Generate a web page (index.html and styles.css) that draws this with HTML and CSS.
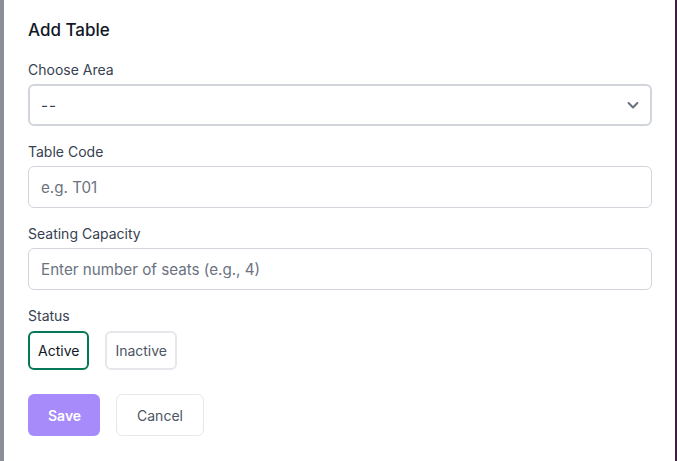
FILE: index.html
```html
<!DOCTYPE html>
<html lang="en">
<head>
<meta charset="utf-8">
<title>Add Table</title>
<link rel="stylesheet" href="styles.css">
</head>
<body>
<div class="screen">
  <div class="backdrop"></div>
  <div class="modal">
    <h2 class="title">Add Table</h2>
    <div class="field">
      <label class="label">Choose Area</label>
      <div class="select">
        <span class="select-value">--</span>
        <svg class="chevron" width="16" height="16" viewBox="0 0 20 20" fill="none" stroke="currentColor" stroke-width="2.6" stroke-linecap="round" stroke-linejoin="round"><path d="M4.5 7.5l5.5 5.5 5.5-5.5"/></svg>
      </div>
    </div>
    <div class="field">
      <label class="label">Table Code</label>
      <input class="input" type="text" placeholder="e.g. T01">
    </div>
    <div class="field">
      <label class="label">Seating Capacity</label>
      <input class="input" type="text" placeholder="Enter number of seats (e.g., 4)">
    </div>
    <div class="field">
      <label class="label">Status</label>
      <div class="status-row">
        <button class="chip chip-active">Active</button>
        <button class="chip">Inactive</button>
      </div>
    </div>
    <div class="actions">
      <button class="btn btn-save">Save</button>
      <button class="btn btn-cancel">Cancel</button>
    </div>
  </div>
  <div class="edge"></div>
</div>
</body>
</html>
```

FILE: styles.css
```css
* { box-sizing: border-box; }
html, body { margin: 0; padding: 0; }
body {
  font-family: Inter, "Noto Sans", "Liberation Sans", sans-serif;
  background: #ffffff;
  width: 677px;
  height: 461px;
  overflow: hidden;
}
.screen {
  display: flex;
  height: 461px;
}
.backdrop {
  width: 4px;
  flex: none;
  background: #8c8e97;
}
.edge {
  width: 2px;
  flex: none;
  background: #3e1f3f;
}
.modal {
  flex: 1;
  background: #ffffff;
  padding: 16px 23px 0 24px;
  display: flex;
  flex-direction: column;
}
.title {
  margin: 0;
  font-size: 17px;
  line-height: 28px;
  font-weight: 500;
  color: #111827;
}
.field {
  margin-top: 16px;
  display: flex;
  flex-direction: column;
}
.label {
  font-size: 14px;
  line-height: 20px;
  color: #374151;
  margin-bottom: 4px;
}
.select, .input {
  height: 42px;
  width: 100%;
  border: 1px solid #d1d5db;
  border-radius: 6px;
  padding: 0 12px;
  font-family: inherit;
  font-size: 15.2px;
  color: #111827;
  background: #fff;
}
.select {
  display: flex;
  align-items: center;
  justify-content: space-between;
  border-width: 2px;
  padding-left: 11px;
  padding-right: 9px;
}
.select-value { color: #374151; letter-spacing: 1px; }
.chevron { color: #6b7280; }
.input::placeholder { color: #6b7280; }
.input { outline: none; }
.status-row {
  display: flex;
  gap: 16px;
  margin-top: 1px;
}
.chip {
  height: 39px;
  padding: 0 8px;
  border: 2px solid #e5e7eb;
  border-radius: 6px;
  background: #fff;
  font-family: inherit;
  font-size: 14px;
  color: #4b5563;
}
.chip-active {
  border-color: #047857;
  color: #111827;
}
.actions {
  display: flex;
  gap: 16px;
  margin-top: 24px;
}
.btn {
  height: 42px;
  border-radius: 6px;
  font-family: inherit;
  font-size: 14px;
  padding: 0 20px;
}
.btn-save {
  background: #a78bfa;
  border: none;
  color: #ffffff;
  font-weight: 600;
  width: 72px;
}
.btn-cancel {
  background: #fff;
  border: 1px solid #e5e7eb;
  color: #4b5563;
  width: 88px;
}
```
